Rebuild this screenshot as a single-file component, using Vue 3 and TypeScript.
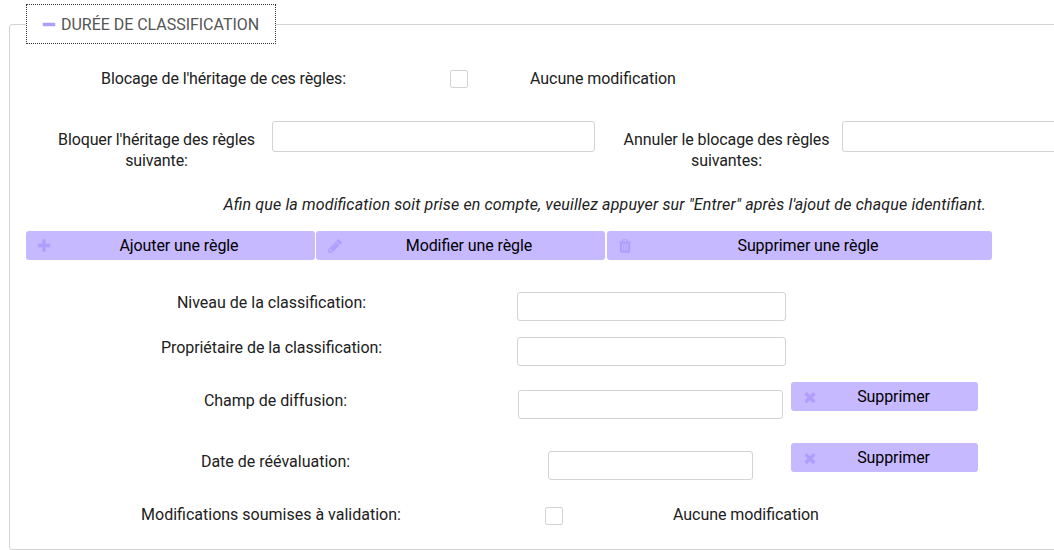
<script setup lang="ts">
import { ref } from 'vue'

type IconName = 'minus' | 'plus' | 'pencil' | 'trash' | 'times'

const icons: Record<IconName, string> = {
  minus: 'M1600 736v192q0 40-28 68t-68 28h-1216q-40 0-68-28t-28-68v-192q0-40 28-68t68-28h1216q40 0 68 28t28 68z',
  plus: 'M1600 736v192q0 40-28 68t-68 28h-416v416q0 40-28 68t-68 28h-192q-40 0-68-28t-28-68v-416h-416q-40 0-68-28t-28-68v-192q0-40 28-68t68-28h416v-416q0-40 28-68t68-28h192q40 0 68 28t28 68v416h416q40 0 68 28t28 68z',
  pencil: 'M491 1536l91-91-235-235-91 91v107h128v128h107zm523-928q0-22-22-22-10 0-17 7l-542 542q-7 7-7 17 0 22 22 22 10 0 17-7l542-542q7-7 7-17zm-54-192l416 416-832 832h-416v-416zm683 96q0 53-37 90l-166 166-416-416 166-165q36-38 90-38 53 0 91 38l235 234q37 39 37 91z',
  trash: 'M704 1376v-704q0-14-9-23t-23-9h-64q-14 0-23 9t-9 23v704q0 14 9 23t23 9h64q14 0 23-9t9-23zm256 0v-704q0-14-9-23t-23-9h-64q-14 0-23 9t-9 23v704q0 14 9 23t23 9h64q14 0 23-9t9-23zm256 0v-704q0-14-9-23t-23-9h-64q-14 0-23 9t-9 23v704q0 14 9 23t23 9h64q14 0 23-9t9-23zm-544-992h448l-48-117q-7-9-17-11h-317q-10 2-17 11zm928 32v64q0 14-9 23t-23 9h-96v948q0 83-47 143.5t-113 60.5h-832q-66 0-113-58.5t-47-141.5v-952h-96q-14 0-23-9t-9-23v-64q0-14 9-23t23-9h309l70-167q15-37 54-63t79-26h320q40 0 79 26t54 63l70 167h309q14 0 23 9t9 23z',
  times: 'M1490 1322q0 40-28 68l-136 136q-28 28-68 28t-68-28l-294-294-294 294q-28 28-68 28t-68-28l-136-136q-28-28-28-68t28-68l294-294-294-294q-28-28-28-68t28-68l136-136q28-28 68-28t68 28l294 294 294-294q28-28 68-28t68 28l136 136q28 28 28 68t-28 68l-294 294 294 294q28 28 28 68z',
}

const actions: { icon: IconName; label: string }[] = [
  { icon: 'plus', label: 'Ajouter une règle' },
  { icon: 'pencil', label: 'Modifier une règle' },
  { icon: 'trash', label: 'Supprimer une règle' },
]

const blockInheritance = ref(false)
const needsApproval = ref(false)
const blockedRules = ref('')
const unblockedRules = ref('')
const level = ref('')
const owner = ref('')
const audience = ref('')
const reassessing = ref('')
</script>

<template>
  <main class="page">
    <section class="panel">
      <h2 class="legend">
        <svg class="icon" viewBox="0 0 1792 1792"><path :d="icons.minus" /></svg>
        <span>DURÉE DE CLASSIFICATION</span>
      </h2>

      <div class="row inherit">
        <label class="label tight" for="inherit">Blocage de l'héritage de ces règles:</label>
        <div class="center"><input id="inherit" v-model="blockInheritance" class="check" type="checkbox" /></div>
        <span class="state">Aucune modification</span>
      </div>

      <div class="row rules">
        <label class="label tight two-line" for="blocked">Bloquer l'héritage des règles suivante:</label>
        <input id="blocked" v-model="blockedRules" class="field" type="text" />
        <label class="label two-line" for="unblocked">Annuler le blocage des règles suivantes:</label>
        <input id="unblocked" v-model="unblockedRules" class="field" type="text" />
      </div>

      <p class="hint">Afin que la modification soit prise en compte, veuillez appuyer sur "Entrer" après l'ajout de chaque identifiant.</p>

      <div class="row actions">
        <button v-for="action in actions" :key="action.icon" class="btn" type="button">
          <svg class="icon" :class="action.icon" viewBox="0 0 1792 1792"><path :d="icons[action.icon]" /></svg>
          <span class="btn-text">{{ action.label }}</span>
        </button>
      </div>

      <div class="row simple">
        <label class="label" for="level">Niveau de la classification:</label>
        <input id="level" v-model="level" class="field" type="text" />
      </div>

      <div class="row simple">
        <label class="label owner" for="owner">Propriétaire de la classification:</label>
        <input id="owner" v-model="owner" class="field" type="text" />
      </div>

      <div class="row removable">
        <label class="label" for="audience">Champ de diffusion:</label>
        <input id="audience" v-model="audience" class="field" type="text" />
        <button class="btn" type="button">
          <svg class="icon" viewBox="0 0 1792 1792"><path :d="icons.times" /></svg>
          <span class="btn-text">Supprimer</span>
        </button>
      </div>

      <div class="row removable">
        <label class="label" for="reassessing">Date de réévaluation:</label>
        <input id="reassessing" v-model="reassessing" class="field date" type="text" />
        <button class="btn" type="button">
          <svg class="icon" viewBox="0 0 1792 1792"><path :d="icons.times" /></svg>
          <span class="btn-text">Supprimer</span>
        </button>
      </div>

      <div class="row approval">
        <label class="label" for="approval">Modifications soumises à validation:</label>
        <div class="center"><input id="approval" v-model="needsApproval" class="check" type="checkbox" /></div>
        <span class="state">Aucune modification</span>
      </div>
    </section>
  </main>
</template>

<style>
body {
  background: #fff;
}
</style>

<style scoped>
.page,
.page * {
  box-sizing: border-box;
}

.page {
  height: 550px;
  padding: 24px 0 0 9px;
  overflow: hidden;
  background: #fff;
  color: #212121;
  font: 16px/21px Roboto, "Liberation Sans", sans-serif;
  font-feature-settings: "liga" 1;
}

.panel {
  width: 1200px;
  height: 526px;
  padding-left: 16px;
  border: 1px solid #d3d3d3;
  border-radius: 3px;
}

.legend {
  display: flex;
  align-items: center;
  width: 250px;
  height: 40px;
  margin: -21px 0 0;
  padding-left: 14px;
  border: 1px dotted #333;
  background: #fff;
  color: #555;
  font-size: 16px;
  font-weight: 400;
  letter-spacing: -0.03px;
  white-space: nowrap;
}

.legend span {
  margin-left: 4px;
}

.icon {
  flex: none;
  width: 16px;
  height: 16px;
  fill: #ae9fff;
}

.legend .icon {
  margin-top: 1px;
}

.row {
  display: grid;
  align-items: start;
}

.label {
  text-align: center;
}

.label.tight {
  letter-spacing: -0.13px;
}

.label.owner {
  letter-spacing: -0.06px;
}

.center {
  display: flex;
  justify-content: center;
}

.state {
  letter-spacing: -0.05px;
}

.field {
  width: 100%;
  height: 29px;
  margin: 0;
  padding: 0 8px;
  border: 1px solid #d3d3d3;
  border-radius: 3px;
  background: #fff;
  color: inherit;
  font: inherit;
}

.check {
  width: 18px;
  height: 18px;
  margin: 0;
  border: 1px solid #d3d3d3;
  border-radius: 2px;
  background: #fff;
  appearance: none;
}

.btn {
  display: flex;
  width: 100%;
  height: 29px;
  padding: 0;
  border: 0;
  border-radius: 3px;
  background: #c6b9ff;
  color: #000;
  font: inherit;
}

.btn .icon {
  margin: 7px -9px 0 10px;
}

.btn .pencil {
  margin-right: -10px;
  margin-left: 11px;
}

.btn-text {
  flex: 1;
  padding-top: 4px;
  text-align: center;
  letter-spacing: -0.09px;
}

.inherit {
  grid-template-columns: 395px 76px 1fr;
  height: 77px;
  padding-top: 24px;
}

.inherit .check {
  margin-top: 2px;
}

.inherit .state {
  padding-left: 33px;
}

.rules {
  grid-template-columns: 246px 323px 247px 323px;
  height: 73px;
}

.rules .field {
  height: 31px;
}

.two-line {
  padding: 8px 8px 0 23px;
}

.rules .two-line ~ .two-line {
  padding: 8px 10px 0 26px;
  letter-spacing: -0.1px;
}

.hint {
  width: 966px;
  height: 37px;
  margin: 0;
  padding-right: 6px;
  font-style: italic;
  letter-spacing: 0.15px;
  text-align: right;
  white-space: nowrap;
}

.actions {
  grid-template-columns: 289px 289px 386px;
  column-gap: 1px;
  height: 61px;
}

.actions .btn:last-child {
  width: 385px;
  margin-left: 1px;
}

.simple {
  grid-template-columns: 491px 269px;
  height: 45px;
}

.removable {
  grid-template-columns: 499px 251px 187px;
  height: 61px;
}

.removable .label {
  padding-top: 8px;
}

.removable .field {
  justify-self: center;
  width: 265px;
  margin-top: 8px;
}

.removable .field.date {
  width: 205px;
}

.removable .btn {
  margin-left: 15px;
}

.removable .btn .icon {
  margin-left: 11px;
}

.approval {
  grid-template-columns: 490px 76px 1fr;
}

.approval .check {
  margin-top: 3px;
}

.approval .state {
  padding-left: 81px;
}
</style>
